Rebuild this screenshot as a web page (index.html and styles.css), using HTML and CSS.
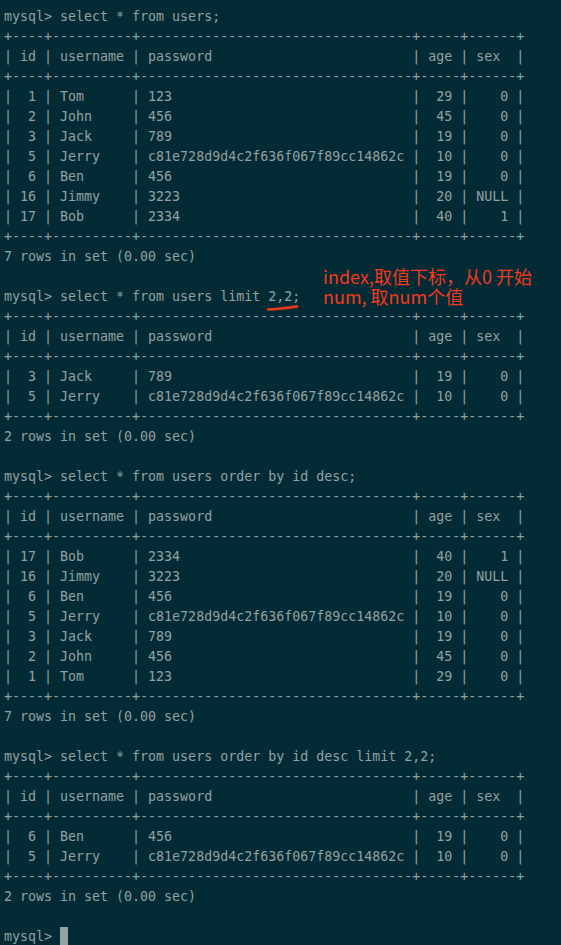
FILE: index.html
```html
<!DOCTYPE html>
<html>
<head>
<meta charset="utf-8">
<link rel="stylesheet" href="styles.css">
</head>
<body>
<div class="term">
<pre class="out">mysql&gt; select * from users;
+----+----------+----------------------------------+-----+------+
| id | username | password                         | age | sex  |
+----+----------+----------------------------------+-----+------+
|  1 | Tom      | 123                              |  29 |    0 |
|  2 | John     | 456                              |  45 |    0 |
|  3 | Jack     | 789                              |  19 |    0 |
|  5 | Jerry    | c81e728d9d4c2f636f067f89cc14862c |  10 |    0 |
|  6 | Ben      | 456                              |  19 |    0 |
| 16 | Jimmy    | 3223                             |  20 | NULL |
| 17 | Bob      | 2334                             |  40 |    1 |
+----+----------+----------------------------------+-----+------+
7 rows in set (0.00 sec)

mysql&gt; select * from users limit 2,2;
+----+----------+----------------------------------+-----+------+
| id | username | password                         | age | sex  |
+----+----------+----------------------------------+-----+------+
|  3 | Jack     | 789                              |  19 |    0 |
|  5 | Jerry    | c81e728d9d4c2f636f067f89cc14862c |  10 |    0 |
+----+----------+----------------------------------+-----+------+
2 rows in set (0.00 sec)

mysql&gt; select * from users order by id desc;
+----+----------+----------------------------------+-----+------+
| id | username | password                         | age | sex  |
+----+----------+----------------------------------+-----+------+
| 17 | Bob      | 2334                             |  40 |    1 |
| 16 | Jimmy    | 3223                             |  20 | NULL |
|  6 | Ben      | 456                              |  19 |    0 |
|  5 | Jerry    | c81e728d9d4c2f636f067f89cc14862c |  10 |    0 |
|  3 | Jack     | 789                              |  19 |    0 |
|  2 | John     | 456                              |  45 |    0 |
|  1 | Tom      | 123                              |  29 |    0 |
+----+----------+----------------------------------+-----+------+
7 rows in set (0.00 sec)

mysql&gt; select * from users order by id desc limit 2,2;
+----+----------+----------------------------------+-----+------+
| id | username | password                         | age | sex  |
+----+----------+----------------------------------+-----+------+
|  6 | Ben      | 456                              |  19 |    0 |
|  5 | Jerry    | c81e728d9d4c2f636f067f89cc14862c |  10 |    0 |
+----+----------+----------------------------------+-----+------+
2 rows in set (0.00 sec)

mysql&gt; <span class="cursor"> </span></pre>
<div class="note">index,取值下标，从0 开始<br>num, 取num个值</div>
<svg class="mark" width="34" height="8" viewBox="0 0 34 8"><path d="M2 5.5 Q14 5 31 2.5" stroke="#f0391c" stroke-width="2.6" fill="none" stroke-linecap="round"/></svg>
</div>
</body>
</html>
```

FILE: styles.css
```css
html, body {
  margin: 0;
  padding: 0;
  background: #032b35;
  height: 100%;
  overflow: hidden;
}
.term {
  position: relative;
  padding: 7px 0 0 4px;
}
.out {
  margin: 0;
  font-family: "DejaVu Sans Mono", "Liberation Mono", monospace;
  font-size: 13.3px;
  line-height: 20px;
  color: #93a1a1;
}
.cursor {
  display: inline-block;
  width: 8px;
  height: 19px;
  background: #93a1a1;
  vertical-align: top;
}
.note {
  position: absolute;
  left: 323px;
  top: 266px;
  font-family: "Noto Sans CJK SC", "Noto Sans", sans-serif;
  font-size: 18px;
  line-height: 20px;
  color: #f23a1d;
}
.mark {
  position: absolute;
  left: 266px;
  top: 304px;
}
```
